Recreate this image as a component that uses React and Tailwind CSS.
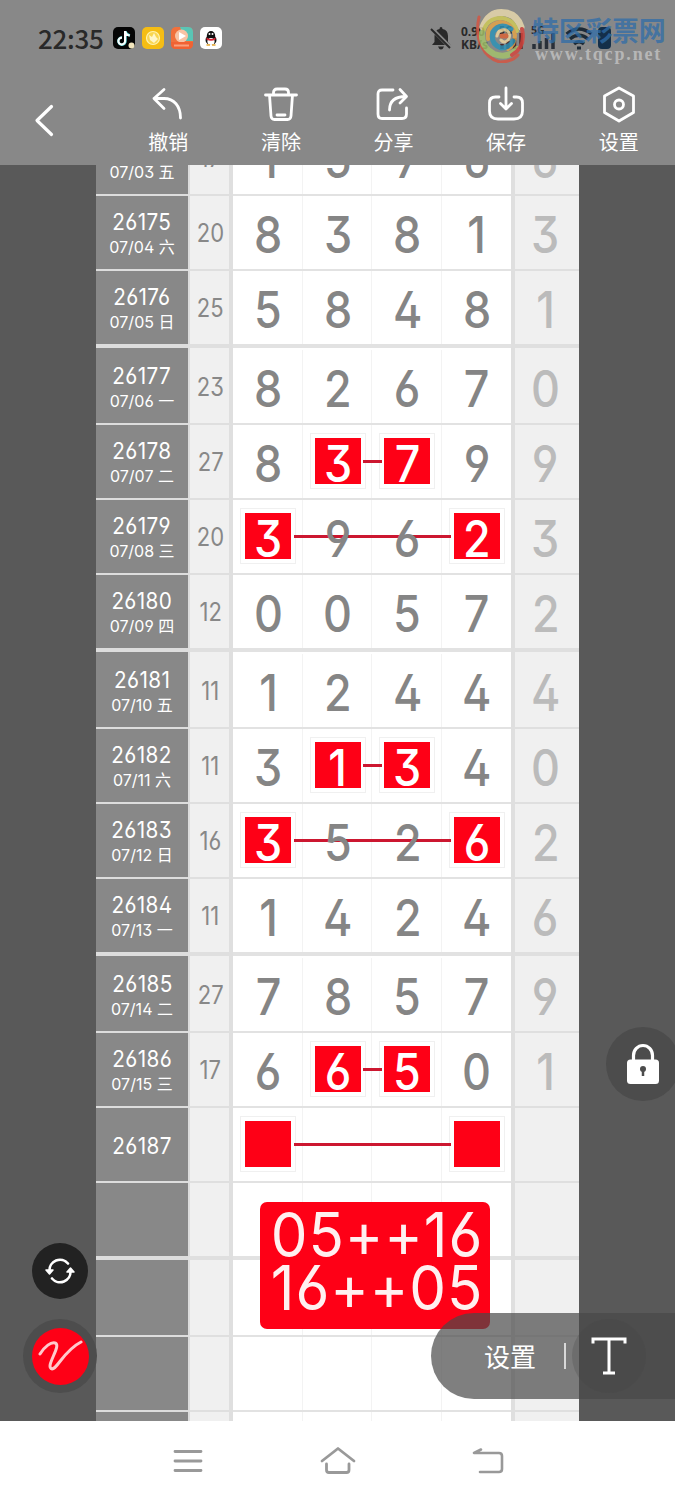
import React from 'react'

const rows = [
    { issue: '26174', date: '07/03 五', sum: '17', digits: ['1', '5', '7', '6'], last: '6' },
    { issue: '26175', date: '07/04 六', sum: '20', digits: ['8', '3', '8', '1'], last: '3' },
    { issue: '26176', date: '07/05 日', sum: '25', digits: ['5', '8', '4', '8'], last: '1' },
    { issue: '26177', date: '07/06 一', sum: '23', digits: ['8', '2', '6', '7'], last: '0' },
    { issue: '26178', date: '07/07 二', sum: '27', digits: ['8', '3', '7', '9'], last: '9', mark: 'inner' },
    { issue: '26179', date: '07/08 三', sum: '20', digits: ['3', '9', '6', '2'], last: '3', mark: 'outer' },
    { issue: '26180', date: '07/09 四', sum: '12', digits: ['0', '0', '5', '7'], last: '2' },
    { issue: '26181', date: '07/10 五', sum: '11', digits: ['1', '2', '4', '4'], last: '4' },
    { issue: '26182', date: '07/11 六', sum: '11', digits: ['3', '1', '3', '4'], last: '0', mark: 'inner' },
    { issue: '26183', date: '07/12 日', sum: '16', digits: ['3', '5', '2', '6'], last: '2', mark: 'outer' },
    { issue: '26184', date: '07/13 一', sum: '11', digits: ['1', '4', '2', '4'], last: '6' },
    { issue: '26185', date: '07/14 二', sum: '27', digits: ['7', '8', '5', '7'], last: '9' },
    { issue: '26186', date: '07/15 三', sum: '17', digits: ['6', '6', '5', '0'], last: '1', mark: 'inner' },
    { issue: '26187', digits: ['', '', '', ''], mark: 'outer' },
    { digits: ['', '', '', ''] },
    { digits: ['', '', '', ''] },
    { digits: ['', '', '', ''] },
    { digits: ['', '', '', ''] },
]

// the table is ruled in groups of four, the last one of a group has the thick line
const rowSizes = [
    'h-[77px] border-b-2 pt-[2px]',
    'h-[75px] border-b-2',
    'h-[75px] border-b-2',
    'h-[77px] border-b-4',
]

const marked = {
    inner: [1, 2],
    outer: [0, 3],
}

const tools = [
    {
        text: '撤销',
        icon: <path d="M12 1.500 L2 10.500 L12 20.500 M2 10.500 H12 C22 10.500 28.500 18 28.500 30" />,
    },
    {
        text: '清除',
        icon: <path d="M0.500 7 H31.500 M8.500 7 V4.500 Q8.500 1 12 1 H20 Q23.500 1 23.500 4.500 V7 M4.500 7 L6 28 Q6.300 31.500 9.500 31.500 H22.500 Q25.700 31.500 26 28 L27.500 7 M12 27 H20" />,
    },
    {
        text: '分享',
        icon: <path d="M16 2 H5 Q1 2 1 6 V26 Q1 30.500 5 30.500 H25 Q29.500 30.500 29.500 26 V20 M12.500 22 C12.500 13 18 8.500 29 8.500 M23 1.500 L29.500 8.500 L23 15" />,
    },
    {
        text: '保存',
        icon: <path d="M9 9 H5.500 Q-0.500 9 -0.500 15 V23 Q-0.500 31 8 31 H24 Q32.500 31 32.500 23 V15 Q32.500 9 26.500 9 H24 M16 0 V21 M10.500 15.500 L16 21 L21.500 15.500" />,
    },
    {
        text: '设置',
        icon: (
            <>
                <path d="M16 0 L30.500 8 V24.500 L16 33 L1.500 24.500 V8 Z" />
                <circle cx="16" cy="16.500" r="4.500" />
            </>
        ),
    },
]

const digitFont = "font-[Inter,'Noto_Sans_CJK_SC',sans-serif] [font-feature-settings:'ss01','cv03','cv04']"

const Digit = ({ children, className }) => (
    <span className={`relative inline-block scale-x-[0.88] text-[51px] leading-none ${className}`}>{children}</span>
)

const StatusBar = () => (
    <div className="flex items-center h-[76px] pl-[38px] text-[#292929]">
        <span className="w-[66px] font-['Noto_Sans_CJK_SC'] font-medium text-[26px] leading-none tracking-[-0.300px]">22:35</span>
        <div className="flex gap-[7px] ml-[9px]">
            <svg className="w-[22px] h-[22px]" viewBox="0 0 22 22">
                <rect width="22" height="22" rx="5" fill="#050505" />
                <path d="M12.500 4 V14 A3.600 3.600 0 1 1 9 10.500 M12.500 4.500 Q13.500 8 17 8.500" fill="none" stroke="#67e3df" strokeWidth="2.400" />
                <path d="M12 4 V14 A3.300 3.300 0 1 1 9 10.800 M12 4.500 Q13 8 16.500 8.500" fill="none" stroke="#fff" strokeWidth="2" />
                <circle cx="18.500" cy="18.500" r="3" fill="#f3e6bd" />
            </svg>
            <svg className="w-[22px] h-[22px]" viewBox="0 0 22 22">
                <rect width="22" height="22" rx="5" fill="#f5bd14" />
                <circle cx="11" cy="11" r="6.500" fill="#f9d650" stroke="#fff3b0" strokeWidth="1.200" />
                <path d="M7 8 L10 10 L12 6 L14 10 L16 12 L12 16 L8 13 Z" fill="#fff6c9" />
            </svg>
            <svg className="w-[22px] h-[22px]" viewBox="0 0 22 22">
                <rect width="22" height="22" rx="5" fill="#f0703c" />
                <path d="M9 0 H17 Q22 0 22 5 V14 H14 Z" fill="#59c5b5" />
                <circle cx="10.500" cy="9" r="6.500" fill="#f8c3a4" />
                <path d="M8 5 L15 9 L8 13 Z" fill="#fff" />
                <path d="M0 15 H22 V17 Q22 22 17 22 H5 Q0 22 0 17 Z" fill="#f16232" />
                <path d="M3 18.500 H18" stroke="#f9a17d" strokeWidth="2" />
            </svg>
            <svg className="w-[22px] h-[22px]" viewBox="0 0 22 22">
                <rect width="22" height="22" rx="5" fill="#fff" />
                <ellipse cx="11" cy="9" rx="4.200" ry="5" fill="#111" />
                <ellipse cx="11" cy="13" rx="5.500" ry="5" fill="#111" />
                <ellipse cx="11" cy="14.500" rx="3.600" ry="3.500" fill="#fff" />
                <path d="M6.500 10.500 Q11 13.500 15.500 10.500 V12.500 Q11 15 6.500 12.500 Z" fill="#df2436" />
                <circle cx="9.500" cy="7" r="1" fill="#fff" />
                <circle cx="12.500" cy="7" r="1" fill="#fff" />
                <path d="M6.500 18 H10 M12 18 H15.500" stroke="#e6a52c" strokeWidth="1.600" />
            </svg>
        </div>
        <svg className="w-[22px] h-[24px] ml-[208px]" viewBox="0 0 22 24">
            <path d="M11 1 Q12.500 1 12.500 3 Q18 4 18 10 V16 L20.500 19 H2 L4.500 16 V10 Q4.500 4 9.500 3 Q9.500 1 11 1 Z M8 20.500 H14 Q13 23.500 11 23.500 Q9 23.500 8 20.500 Z" fill="#292929" />
            <path d="M1 2 L21 22" stroke="#888" strokeWidth="4" />
            <path d="M1 3 L20 22" stroke="#292929" strokeWidth="2" />
        </svg>
        <div className="w-[30px] ml-[9px] font-['Noto_Sans'] font-bold text-[12px] leading-[13px] whitespace-nowrap">
            <div>0.90</div>
            <div>KB/s</div>
        </div>
        <div className="flex gap-[6px] ml-[8px]">
            {['left', 'right'].map((side) => (
                <svg key={side} className="w-[26px] h-[26px] overflow-visible" viewBox="0 0 26 26">
                    <text x="0" y="9" fontSize="10.500" fontWeight="700" fontFamily="Noto Sans" fill="#292929">5G</text>
                    <path d="M3 24 V19 M9 24 V16 M15.500 24 V13 M22 24 V8" stroke={side === 'left' ? '#4c2a2c' : '#292f38'} strokeWidth="3.500" />
                </svg>
            ))}
        </div>
        <svg className="w-[28px] h-[23px] ml-[8px]" viewBox="0 0 28 23" fill="none" stroke="#1d2a36" strokeWidth="3.200">
            <path d="M1.500 7 Q14 -3 26.500 7 M5 12 Q14 4.500 23 12 M9 17 Q14 12.500 19 17" />
            <path d="M14 19.500 V22.500" strokeWidth="4" />
        </svg>
        <div className="w-[13px] h-[22px] ml-[5px] rounded-[4px] bg-[#142f49]" />
    </div>
)

const Watermark = () => (
    <div className="absolute top-[9px] left-[476px] flex">
        <svg className="w-[50px] h-[54px] opacity-80" viewBox="0 0 50 54" fill="none" strokeLinecap="round">
            <path d="M3 8 Q-1 26 6 38 Q12 50 24 53 Q36 53 42 46" stroke="#d9533f" strokeWidth="3" />
            <path d="M7 18 Q14 1 30 4 Q41 6 45 18" stroke="#ecdcae" strokeWidth="7" />
            <path d="M7 24 Q10 9 26 9 Q38 11 41 22" stroke="#d3cf55" strokeWidth="4" />
            <path d="M6 24 Q5 38 18 45 Q32 50 41 40" stroke="#a5c56b" strokeWidth="6" />
            <path d="M46 20 Q50 38 36 46" stroke="#d8433b" strokeWidth="4" />
            <path d="M12 30 Q10 16 24 13 Q36 14 39 26 Q39 36 32 40" stroke="#e8a545" strokeWidth="4" />
            <path d="M35 20 Q24 13 17 23 Q14 35 25 39 Q33 39 37 32" stroke="#2994b9" strokeWidth="5" />
            <path d="M21 27 Q22 20 30 21 Q36 25 32 31 Q28 35 25 31" stroke="#f0d9a0" strokeWidth="3" />
            <path d="M26 27 H30" stroke="#df6234" strokeWidth="5" />
        </svg>
        <div className="ml-[6px] pt-[6px] whitespace-nowrap">
            <div className="font-['Noto_Sans_CJK_SC',sans-serif] font-bold text-[27px] leading-[30px] tracking-[-0.300px] text-[#2f6da8]/75">特区彩票网</div>
            <div className="ml-[3px] font-['Liberation_Serif',serif] font-bold text-[18px] leading-[19px] tracking-[1.850px] text-[#c4c4c4]/80">www.tqcp.net</div>
        </div>
    </div>
)

const Header = () => (
    <header className="relative shrink-0 h-[165px] bg-[#888888]">
        <StatusBar />
        <div className="flex h-[89px] text-white">
            <div className="flex items-center w-[112px] pl-[34px]">
                <svg className="w-[22px] h-[34px]" viewBox="0 0 22 34" fill="none" stroke="currentColor" strokeWidth="3.200" strokeLinecap="round" strokeLinejoin="round">
                    <path d="M17.500 2.500 L3 16.500 L17.500 30.500" />
                </svg>
            </div>
            {tools.map((x) => (
                <button key={x.text} className="flex flex-col items-center w-[112.600px] pt-[12px]">
                    <svg className="w-[32px] h-[32px] overflow-visible" viewBox="0 0 32 32" fill="none" stroke="currentColor" strokeWidth="2.800" strokeLinecap="round" strokeLinejoin="round">
                        {x.icon}
                    </svg>
                    <span className="mt-[8px] font-['Noto_Sans_CJK_SC',sans-serif] text-[20px] leading-[28px]">{x.text}</span>
                </button>
            ))}
        </div>
        <Watermark />
    </header>
)

const Row = ({ row, size }) => {
    const cells = marked[row.mark] || []

    return (
        <div className="flex">
            <div className={`flex flex-col items-center justify-center w-[92px] bg-[#888888] border-[#dddddd] text-white ${size}`}>
                {row.issue && <span className="relative top-px scale-x-[0.9] text-[23px] leading-[26px] tracking-[0.400px]">{row.issue}</span>}
                {row.date && <span className="relative top-px text-[16px] leading-[24px] whitespace-nowrap">{row.date}</span>}
            </div>
            <div className={`flex items-center justify-center w-[45px] bg-[#f0f0f0] border-[#dfdfdf] text-[#888888] shadow-[inset_2px_0_#dcdcdc,inset_-4px_0_#dfdfdf] ${size}`}>
                <span className="relative top-px scale-x-[0.88] text-[25px] leading-none">{row.sum}</span>
            </div>
            <div className={`relative flex w-[278px] bg-white border-[#e2e2e2] text-[#858585] ${size}`}>
                {row.mark === 'inner' && <div className="absolute top-[35px] left-[130px] w-[19px] h-[3px] bg-[#cc1730]" />}
                {row.mark === 'outer' && <div className="absolute top-[35px] left-[61px] w-[157px] h-[3px] bg-[#cc1730]" />}
                {row.digits.map((digit, index) => (
                    <div key={index} className="flex items-center justify-center w-[69.600px] pl-[2px] border-r border-[#f3f3f3] last:border-r-0 last:pl-px">
                        {cells.includes(index) ? (
                            <div className="-mt-[2px] border border-[#f0f0f0] p-[4px]">
                                <div className="flex items-center justify-center w-[46px] h-[46px] pt-[4px] bg-[#fe0016]">
                                    <Digit className="top-px font-medium text-white">{digit}</Digit>
                                </div>
                            </div>
                        ) : (
                            <Digit className="top-[2px] font-medium">{digit}</Digit>
                        )}
                    </div>
                ))}
            </div>
            <div className={`flex items-center justify-center w-[68px] pl-px bg-[#f0f0f0] border-[#dfdfdf] text-[#bbbbbb] shadow-[inset_4px_0_#dfdfdf] ${size}`}>
                <Digit className="top-[2px] font-medium">{row.last}</Digit>
            </div>
        </div>
    )
}

const NavBar = () => (
    <nav className="flex items-center justify-center gap-[114px] h-[79px] bg-white text-[#999999]">
        <svg className="w-[36px] h-[32px]" viewBox="0 0 36 32" fill="none" stroke="currentColor" strokeWidth="2.800" strokeLinecap="round">
            <path d="M5 6.500 H31 M5 16 H31 M5 25.500 H31" />
        </svg>
        <svg className="w-[36px] h-[32px]" viewBox="0 0 36 32" fill="none" stroke="currentColor" strokeWidth="2.800" strokeLinecap="round" strokeLinejoin="round">
            <path d="M2 16 L18 3.500 L34 16 M6.500 19 V25 Q6.500 27.500 9 27.500 H26.500 Q29 27.500 29 25 V19" />
        </svg>
        <svg className="w-[36px] h-[32px]" viewBox="0 0 36 32" fill="none" stroke="currentColor" strokeWidth="2.600" strokeLinecap="round" strokeLinejoin="round">
            <path d="M11 4.500 L4 8 H29 Q32 8 32 11 V24 Q32 27 29 27 H10" />
        </svg>
    </nav>
)

const App = () => {
    return (
        <main className={`relative flex flex-col w-[675px] h-[1500px] overflow-hidden bg-[#595959] ${digitFont}`}>
            <Header />
            <section className="h-[1256px] pl-[96px] overflow-hidden">
                <div className="-mt-[44px] w-[483px]">
                    {rows.map((row, index) => (
                        <Row key={index} row={row} size={rowSizes[(index + 1) % 4]} />
                    ))}
                </div>
            </section>
            <NavBar />

            {/* note dropped on the board */}
            <div className="absolute top-[1202px] left-[260px] flex flex-col items-center w-[230px] h-[127px] pt-[6px] pl-[4px] rounded-[7px] bg-[#fe0016] text-[#fff0f0]">
                <span className="scale-x-[0.94] text-[62px] leading-[53px] tracking-[1px] whitespace-nowrap">05++16</span>
                <span className="scale-x-[0.94] text-[62px] leading-[53px] tracking-[1px] whitespace-nowrap">16++05</span>
            </div>

            {/* floating buttons */}
            <button className="absolute top-[1027px] left-[606px] flex items-center justify-center w-[74px] h-[74px] rounded-full bg-[#4c4c4c]">
                <svg className="w-[34px] h-[42px]" viewBox="0 0 34 42">
                    <path d="M7.500 18 V12.500 A9.500 10 0 0 1 26.500 12.500 V18" fill="none" stroke="#fff" strokeWidth="3.200" />
                    <rect x="1" y="16.500" width="32" height="24.500" rx="3.500" fill="#fff" />
                    <circle cx="17" cy="26" r="3" fill="#4c4c4c" />
                    <path d="M17 26 V33" stroke="#4c4c4c" strokeWidth="2.500" />
                </svg>
            </button>
            <button className="absolute top-[1243px] left-[32px] flex items-center justify-center w-[56px] h-[56px] rounded-full bg-[#222222]">
                <svg className="w-[32px] h-[28px]" viewBox="0 0 32 28" fill="none" stroke="#fff" strokeWidth="2.600" strokeLinecap="round">
                    <path d="M5.500 14 A10.500 10.500 0 0 1 24 6.500 M26.500 14 A10.500 10.500 0 0 1 8 21.500" />
                    <path d="M2 13 H9 L5.500 17 Z M23 15 H30 L26.500 11 Z" fill="#fff" strokeWidth="1.500" strokeLinejoin="round" />
                </svg>
            </button>
            <button className="absolute top-[1319px] left-[23px] flex items-center justify-center w-[74px] h-[74px] rounded-full bg-[#4d4d4d]">
                <div className="flex items-center justify-center w-[57px] h-[57px] rounded-full bg-[#fe0016]">
                    <svg className="w-[46px] h-[34px]" viewBox="0 0 46 34" fill="none" stroke="#ffc9cc" strokeWidth="3" strokeLinecap="round" strokeLinejoin="round">
                        <path d="M3 15 C8 7 14 3 18 4 C25 6 9 26 14 29.500 C19 33 26 12 44 3" />
                    </svg>
                </div>
            </button>
            <div className="absolute top-[1313px] left-[431px] flex items-center w-[244px] h-[86px] pl-[53px] rounded-l-full bg-[#484848]/70 text-white">
                <span className="font-['Noto_Sans_CJK_SC',sans-serif] text-[26px] leading-none">设置</span>
                <div className="w-[2px] h-[26px] ml-[28px] bg-[#d8d8d8]" />
                <div className="flex items-center justify-center w-[74px] h-[74px] ml-[6px] rounded-full bg-[#444444]/25">
                    <svg className="w-[36px] h-[38px]" viewBox="0 0 36 38" fill="none" stroke="currentColor" strokeWidth="3">
                        <path d="M2 6.500 V2 H34 V6.500 M18 2 V36 M12 36 H24" />
                    </svg>
                </div>
            </div>
        </main>
    )
}

export default App
